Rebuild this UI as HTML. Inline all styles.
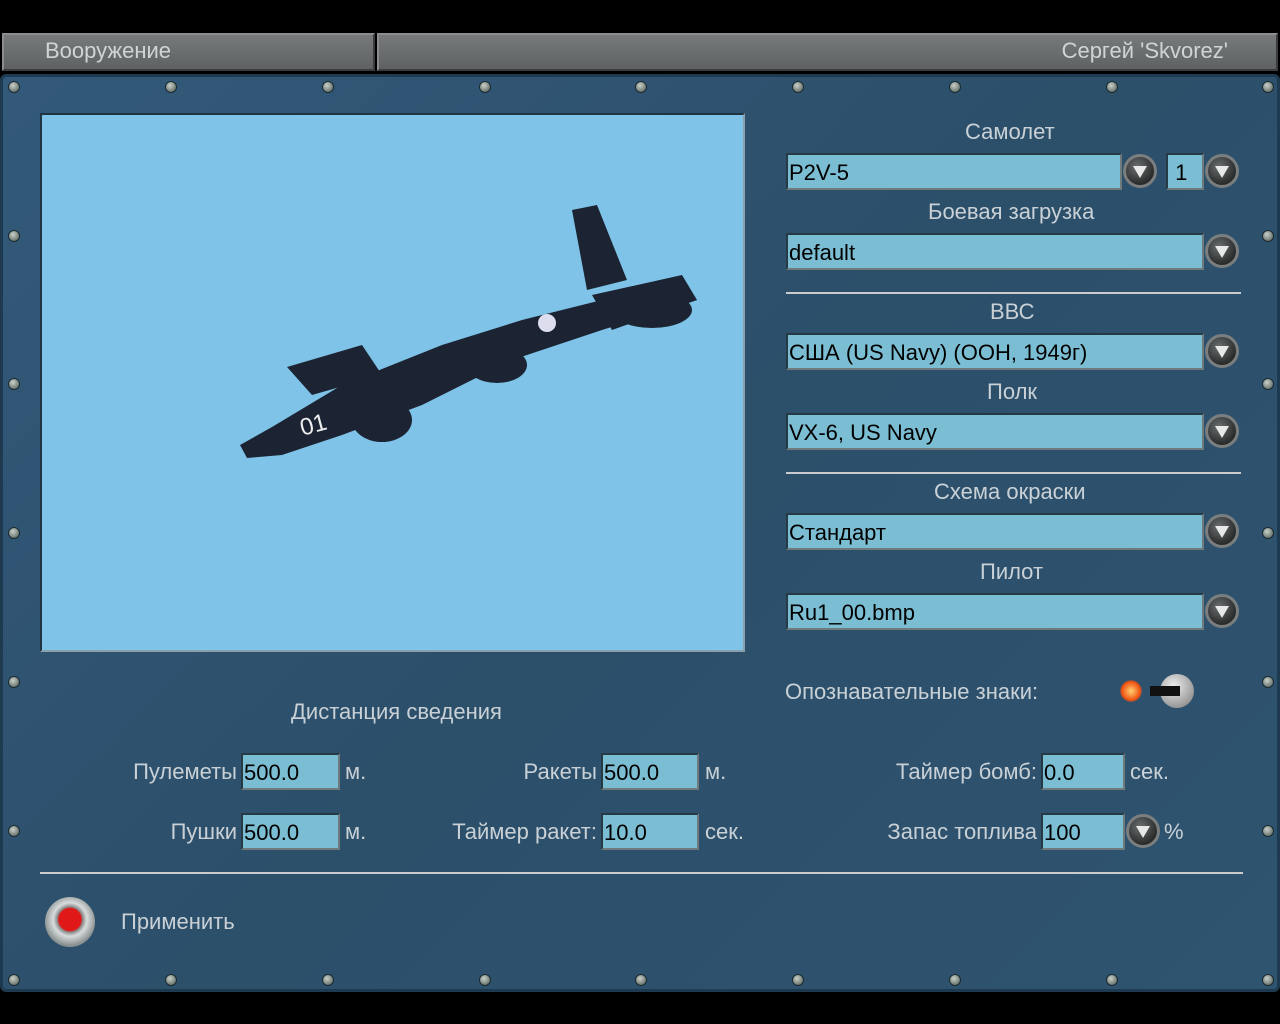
<!DOCTYPE html>
<html><head><meta charset="utf-8"><style>
*{margin:0;padding:0;box-sizing:border-box}
body{width:1280px;height:1024px;background:#000;position:relative;overflow:hidden;font-family:"Liberation Sans",sans-serif}
.a{position:absolute}
.bar{top:33px;height:38px;background:linear-gradient(#767a7a,#5e6262);border:2px solid #8a8e8e;border-bottom-color:#3a3d3d;border-right-color:#3a3d3d}
.panel{left:0;top:74px;width:1280px;height:918px;background:linear-gradient(135deg,#33597a,#2c4f6a 50%,#2f5470);border:3px solid #1e3a50;border-radius:6px}
.lbl{color:#c9d1d6;font-size:22px;white-space:nowrap}
.f{background:#7bbdd2;border:2px solid #6f7a7c;border-top-color:#263a46;border-left-color:#263a46;color:#000;font-size:22px;padding:1px 0 0 1px;height:37px;line-height:33px}
.b{width:34px;height:34px;border-radius:50%;background:radial-gradient(circle at 40% 35%,#6b6f6f,#2a2c2c 70%);border:3px solid #7a7e7e}
.b:after{content:"";position:absolute;left:7px;top:9px;border-left:7px solid transparent;border-right:7px solid transparent;border-top:12px solid #e8e8e8}
.s{width:12px;height:12px;border-radius:50%;background:radial-gradient(circle at 40% 35%,#c8d0c8,#4a5550);border:1px solid #1a2a30}
.line{height:2px;background:#c8ccce}
</style></head><body>
<div class="a bar" style="left:2px;width:373px"></div>
<div class="a bar" style="left:377px;width:901px"></div>
<div class="a lbl" style="left:45px;top:38px;color:#d0d4d4">Вооружение</div>
<div class="a lbl" style="right:52px;top:38px;color:#d0d4d4">Сергей 'Skvorez'</div>
<div class="a panel"></div>
<div id="screws"></div>
<div class="a" style="left:40px;top:113px;width:705px;height:539px;background:#7fc4e8;border:2px solid #1f3440;border-right-color:#8aa0ac;border-bottom-color:#8aa0ac">
<svg width="701" height="535" viewBox="0 0 701 535" style="position:absolute;left:0;top:0">
<g fill="#1c2433">
<path d="M198 330 L230 312 L300 270 L400 230 L480 205 L560 185 L640 175 L655 185 L560 215 L470 245 L380 290 L300 320 L240 340 L205 343 Z"/>
<path d="M530 95 L555 90 L585 165 L545 175 Z"/>
<path d="M550 180 L640 160 L655 185 L570 215 Z"/>
<path d="M245 252 L320 230 L340 260 L270 280 Z"/>
<ellipse cx="340" cy="305" rx="30" ry="22"/>
<ellipse cx="455" cy="250" rx="30" ry="18"/>
<ellipse cx="610" cy="195" rx="40" ry="18"/>
</g>
<circle cx="505" cy="208" r="9" fill="#dde"/>
<text x="258" y="318" fill="#eee" font-size="24" font-family="Liberation Sans" transform="rotate(-15 270 310)">01</text>
</svg></div>
<div class="a lbl" style="left:965px;top:119px">Самолет</div>
<div class="a f" style="left:786px;top:153px;width:336px">P2V-5</div>
<div class="a b" style="left:1123px;top:154px"></div>
<div class="a f" style="left:1166px;top:153px;width:38px">&nbsp;1</div>
<div class="a b" style="left:1205px;top:154px"></div>
<div class="a lbl" style="left:928px;top:199px">Боевая загрузка</div>
<div class="a f" style="left:786px;top:233px;width:418px">default</div>
<div class="a b" style="left:1205px;top:234px"></div>
<div class="a line" style="left:786px;top:292px;width:455px"></div>
<div class="a lbl" style="left:990px;top:299px">ВВС</div>
<div class="a f" style="left:786px;top:333px;width:418px">США (US Navy) (ООН, 1949г)</div>
<div class="a b" style="left:1205px;top:334px"></div>
<div class="a lbl" style="left:987px;top:379px">Полк</div>
<div class="a f" style="left:786px;top:413px;width:418px">VX-6, US Navy</div>
<div class="a b" style="left:1205px;top:414px"></div>
<div class="a line" style="left:786px;top:472px;width:455px"></div>
<div class="a lbl" style="left:934px;top:479px">Схема окраски</div>
<div class="a f" style="left:786px;top:513px;width:418px">Стандарт</div>
<div class="a b" style="left:1205px;top:514px"></div>
<div class="a lbl" style="left:980px;top:559px">Пилот</div>
<div class="a f" style="left:786px;top:593px;width:418px">Ru1_00.bmp</div>
<div class="a b" style="left:1205px;top:594px"></div>
<div class="a lbl" style="left:785px;top:679px">Опознавательные знаки:</div>
<div class="a" style="left:1120px;top:680px;width:22px;height:22px;border-radius:50%;background:radial-gradient(#ffd070,#f05010 60%,transparent 75%)"></div>
<div class="a" style="left:1160px;top:674px;width:34px;height:34px;border-radius:50%;background:radial-gradient(circle at 40% 35%,#eee,#777)"></div>
<div class="a" style="left:1150px;top:686px;width:30px;height:10px;background:#111"></div>
<div class="a lbl" style="left:291px;top:699px">Дистанция сведения</div>
<div class="a lbl" style="right:1043px;top:759px">Пулеметы</div>
<div class="a f" style="left:241px;top:753px;width:99px">500.0</div>
<div class="a lbl" style="left:345px;top:759px">м.</div>
<div class="a lbl" style="right:1043px;top:819px">Пушки</div>
<div class="a f" style="left:241px;top:813px;width:99px">500.0</div>
<div class="a lbl" style="left:345px;top:819px">м.</div>
<div class="a lbl" style="right:683px;top:759px">Ракеты</div>
<div class="a f" style="left:601px;top:753px;width:98px">500.0</div>
<div class="a lbl" style="left:705px;top:759px">м.</div>
<div class="a lbl" style="right:683px;top:819px">Таймер ракет:</div>
<div class="a f" style="left:601px;top:813px;width:98px">10.0</div>
<div class="a lbl" style="left:705px;top:819px">сек.</div>
<div class="a lbl" style="right:243px;top:759px">Таймер бомб:</div>
<div class="a f" style="left:1041px;top:753px;width:84px">0.0</div>
<div class="a lbl" style="left:1130px;top:759px">сек.</div>
<div class="a lbl" style="right:243px;top:819px">Запас топлива</div>
<div class="a f" style="left:1041px;top:813px;width:84px">100</div>
<div class="a b" style="left:1126px;top:814px"></div>
<div class="a lbl" style="left:1164px;top:819px">%</div>
<div class="a line" style="left:40px;top:872px;width:1203px"></div>
<div class="a" style="left:45px;top:897px;width:50px;height:50px;border-radius:50%;background:radial-gradient(circle at 50% 45%,#e01818 30%,#888 34%,#d8dcdc 45%,#8a9090 70%)"></div>
<div class="a lbl" style="left:121px;top:909px">Применить</div>
<script>
var h='';var xs=[14,171,328,485,641,798,955,1112,1268],ys=[87,236,384,533,682,831,980];
xs.forEach(function(x){[87,980].forEach(function(y){h+='<div class="a s" style="left:'+(x-6)+'px;top:'+(y-6)+'px"></div>'})});
ys.slice(1,6).forEach(function(y){[14,1268].forEach(function(x){h+='<div class="a s" style="left:'+(x-6)+'px;top:'+(y-6)+'px"></div>'})});
document.getElementById('screws').innerHTML=h;
</script>
</body></html>
